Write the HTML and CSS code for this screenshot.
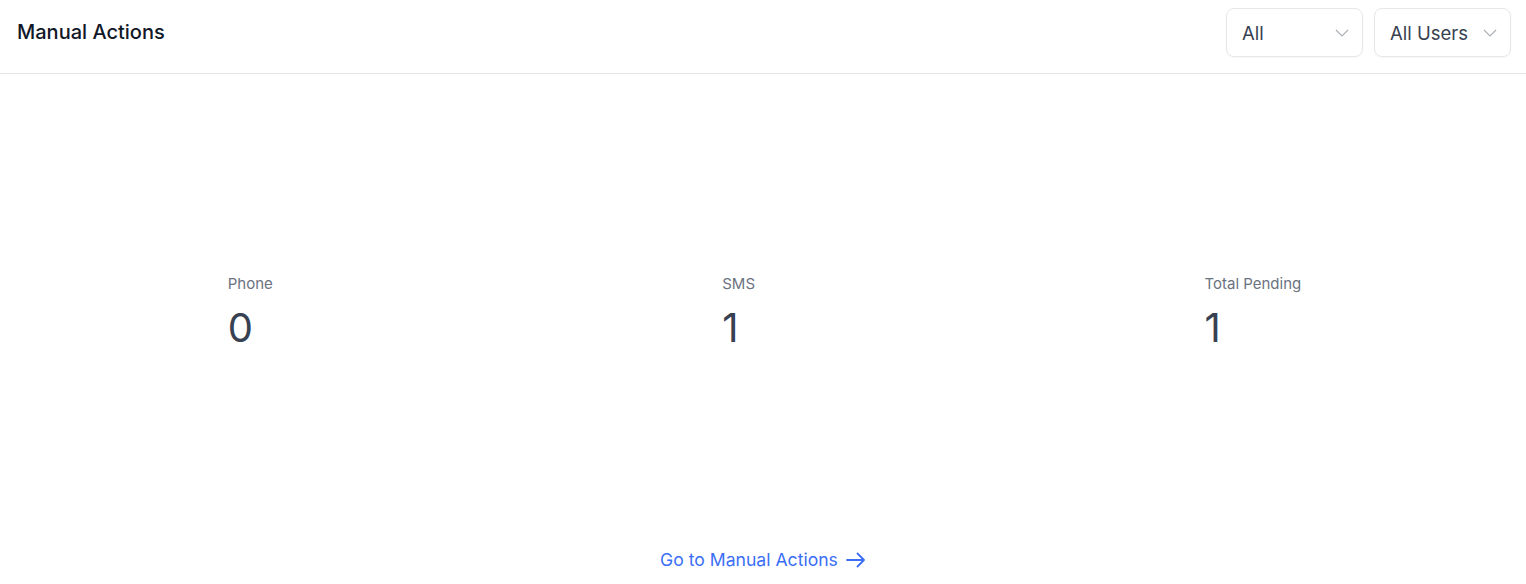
FILE: index.html
```html
<!DOCTYPE html>
<html lang="en">
<head>
    <meta charset="UTF-8">
    <meta name="viewport" content="width=device-width, initial-scale=1.0">
    <title>Manual Actions</title>
    <link rel="stylesheet" href="styles.css">
</head>
<body>
    <div class="card">
        <div class="card-header">
            <h2 class="card-title">Manual Actions</h2>
            <div class="filters">
                <div class="select select-type">
                    <span>All</span>
                    <svg class="chevron" width="14" height="8" viewBox="0 0 14 8"><path d="M1 1l6 6 6-6" fill="none" stroke="#a9adb5" stroke-width="1.1"/></svg>
                </div>
                <div class="select">
                    <span>All Users</span>
                    <svg class="chevron" width="14" height="8" viewBox="0 0 14 8"><path d="M1 1l6 6 6-6" fill="none" stroke="#a9adb5" stroke-width="1.1"/></svg>
                </div>
            </div>
        </div>

        <div class="stats">
            <div class="stat">
                <div class="stat-label">Phone</div>
                <div class="stat-value">0</div>
            </div>
            <div class="stat">
                <div class="stat-label">SMS</div>
                <div class="stat-value">1</div>
            </div>
            <div class="stat">
                <div class="stat-label">Total Pending</div>
                <div class="stat-value">1</div>
            </div>
        </div>

        <div class="card-footer">
            <a href="#" class="footer-link">Go to Manual Actions
                <svg width="20" height="16" viewBox="0 0 20 16"><path d="M1 8h17M11.5 1.5L18 8l-6.5 6.5" fill="none" stroke="currentColor" stroke-width="1.8" stroke-linecap="round" stroke-linejoin="round"/></svg>
            </a>
        </div>
    </div>
</body>
</html>
```

FILE: styles.css
```css
body {
    margin: 0;
    font-family: Inter, "Noto Sans", sans-serif;
    background-color: #fff;
    color: #111827;
}

.card {
    background-color: #fff;
}

.card-header {
    display: flex;
    justify-content: space-between;
    align-items: flex-start;
    height: 65px;
    padding: 8px 15px 0 17px;
    border-bottom: 1px solid #e5e7eb;
}

.card-title {
    margin: 0;
    font-size: 20px;
    font-weight: 500;
    line-height: 49px;
    color: #111827;
}

.filters {
    display: flex;
    gap: 11px;
}

.select {
    display: flex;
    align-items: center;
    justify-content: space-between;
    gap: 15px;
    height: 47px;
    padding: 0 13px 0 15px;
    border: 1px solid #e5e7eb;
    border-radius: 8px;
    font-size: 18.5px;
    color: #374151;
    box-shadow: 0 1px 2px rgba(0, 0, 0, 0.03);
}

.select-type {
    width: 107px;
}

.chevron {
    flex-shrink: 0;
}

.stats {
    display: flex;
    justify-content: space-around;
    align-items: center;
    height: 470px;
    padding: 4px 0 0 3px;
}

.stat-label {
    font-size: 15px;
    line-height: 20px;
    color: #6b7280;
    margin-bottom: 10px;
}

.stat-value {
    font-size: 40px;
    line-height: 48px;
    color: #374151;
}

.card-footer {
    text-align: center;
}

.footer-link {
    display: inline-flex;
    align-items: center;
    gap: 8px;
    font-size: 17.6px;
    line-height: 24px;
    color: #3b6ef5;
    text-decoration: none;
}
```
